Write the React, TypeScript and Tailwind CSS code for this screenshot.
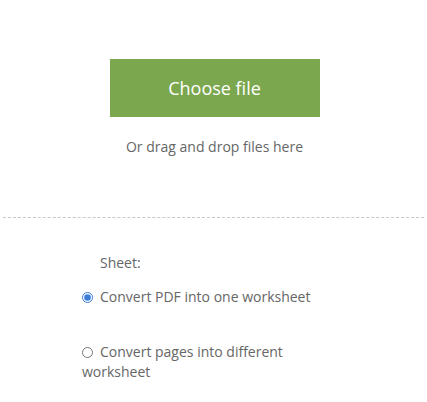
export default function App() {
  return (
    <div className="h-[402px] w-[427px] bg-white font-['Open_Sans',sans-serif] text-[#666]">
      <div className="flex flex-col items-center pt-[59px]">
        <button className="flex h-[58px] w-[210px] translate-x-[1px] items-center justify-center bg-[#7ba74f] text-[18px] text-white">
          Choose file
        </button>
        <p className="mt-[20px] translate-x-[1px] text-[14px] leading-5">Or drag and drop files here</p>
      </div>
      <div className="mx-[3px] mt-[60px] border-t border-dashed border-[#c8c8c8]" />
      <div className="ml-[82px] mt-[35px] w-[240px] text-[14px] leading-5">
        <p className="pl-[18px]">Sheet:</p>
        <label className="mt-[14px] block">
          <input type="radio" name="sheet" defaultChecked className="mr-[7px] h-[11px] w-[11px] align-[-1px] accent-[#3b7ddd]" />
          Convert PDF into one worksheet
        </label>
        <label className="mt-[35px] block">
          <input type="radio" name="sheet" className="mr-[7px] h-[11px] w-[11px] align-[-1px]" />
          Convert pages into different worksheet
        </label>
      </div>
    </div>
  );
}
